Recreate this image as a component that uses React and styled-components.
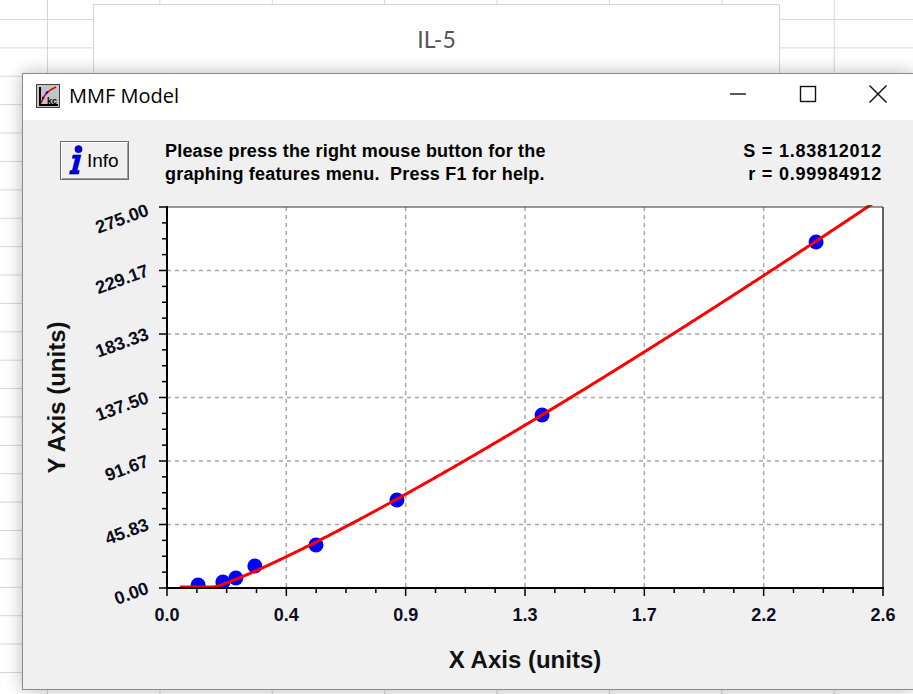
import styled, { createGlobalStyle } from "styled-components";

const GlobalStyle = createGlobalStyle`
  html, body {
    margin: 0;
    padding: 0;
    background: #fff;
  }
  body {
    font-family: "Liberation Sans", Arial, sans-serif;
  }
`;

// plot frame in page coordinates
const PLOT = { left: 167, right: 883, top: 207, bottom: 588 };
const X_MAX = 2.6;
const Y_MAX = 275;

const xScale = (v) => PLOT.left + (v / X_MAX) * (PLOT.right - PLOT.left);
const yScale = (v) => PLOT.bottom - (v / Y_MAX) * (PLOT.bottom - PLOT.top);

const points = [
  [0.113, 2.2],
  [0.203, 4.3],
  [0.25, 7.2],
  [0.319, 15.9],
  [0.541, 31.0],
  [0.835, 63.5],
  [1.362, 124.9],
  [2.357, 249.7],
];

// fitted model, flat at zero below the threshold
const model = (x) => (x <= 0.17 ? 0 : 101.5 * Math.pow(x - 0.17, 1.15));

const yLabels = ["0.00", "45.83", "91.67", "137.50", "183.33", "229.17", "275.00"];
const xLabels = ["0.0", "0.4", "0.9", "1.3", "1.7", "2.2", "2.6"];

const Desktop = styled.div`
  width: 913px;
  height: 694px;
  overflow: hidden;
  padding-top: 4px;
  box-sizing: border-box;
  background-color: #fff;
  background-image: linear-gradient(to right, #d6d6d6 1px, transparent 1px),
    linear-gradient(to bottom, #d6d6d6 1px, transparent 1px);
  background-size: 112.4px 28.4px;
  background-position: 47px 19px;
`;

const ChartTitleBox = styled.div`
  margin-left: 93px;
  width: 687px;
  height: 69px;
  box-sizing: border-box;
  background: #fff;
  border: 1px solid #d4d4d4;
  border-bottom: none;
  display: flex;
  align-items: center;
  justify-content: center;
  font-family: Lato, "Open Sans", sans-serif;
  font-size: 23px;
  color: #555;
`;

const Window = styled.div`
  margin-left: 22px;
  width: 892px;
  height: 617px;
  box-sizing: border-box;
  border: 1px solid #8c8c8c;
  background: #f0f0f0;
  box-shadow: 0 0 16px rgba(0, 0, 0, 0.28);
  display: flex;
  flex-direction: column;
`;

const TitleBar = styled.div`
  height: 46px;
  flex: none;
  background: #fff;
  display: flex;
  align-items: center;
  padding-left: 13px;
`;

const AppIcon = styled.svg`
  width: 24px;
  height: 24px;
  margin-top: -3px;
  flex: none;
`;

const TitleText = styled.span`
  margin-left: 9px;
  margin-top: -3px;
  font-family: "Open Sans", "Noto Sans", sans-serif;
  font-size: 20px;
  color: #000;
`;

const Controls = styled.div`
  margin-left: auto;
  display: flex;
  height: 100%;
`;

const ControlButton = styled.div`
  width: 70px;
  height: 100%;
  display: flex;
  align-items: center;
  justify-content: center;
  margin-top: -3px;

  svg {
    stroke: #111;
    stroke-width: 1.4;
    fill: none;
  }
`;

const Body = styled.div`
  flex: 1;
  display: flex;
  flex-direction: column;
`;

const Header = styled.div`
  height: 67px;
  flex: none;
  box-sizing: border-box;
  padding: 21px 31px 0 37px;
  display: flex;
  align-items: flex-start;
`;

const InfoButton = styled.div`
  width: 69px;
  height: 39px;
  box-sizing: border-box;
  flex: none;
  border: 1px solid #6a6a6a;
  box-shadow: inset 1px 1px 0 #fff, inset -1px -1px 0 #a0a0a0;
  background: #f0f0f0;
  display: flex;
  align-items: center;
  padding-left: 7px;
  gap: 4px;
  font-family: "Liberation Sans", Arial, sans-serif;
  font-size: 19px;
  color: #000;
`;

const Message = styled.div`
  margin-left: 36px;
  margin-top: -1px;
  font-family: "Liberation Sans", Arial, sans-serif;
  font-weight: bold;
  font-size: 18px;
  line-height: 23px;
  letter-spacing: 0.2px;
  color: #000;
  white-space: pre;
`;

const Stats = styled(Message)`
  margin-left: auto;
  text-align: right;
  letter-spacing: 0.8px;
`;

const Chart = styled.svg`
  display: block;
  width: 890px;
  height: 502px;
  flex: none;
`;

const TickLabel = styled.text`
  font-family: "Liberation Sans", Arial, sans-serif;
  font-weight: bold;
  font-size: 18px;
  fill: #0c0c1c;
`;

const AxisTitle = styled.text`
  font-family: "Liberation Sans", Arial, sans-serif;
  font-weight: bold;
  font-size: 24px;
  fill: #111;
`;

const InfoIcon = () => (
  <svg width="15" height="31" viewBox="0 0 15 31">
    <circle cx="10.5" cy="4.2" r="3.6" fill="#0000e6" stroke="#00007a" strokeWidth="0.6" />
    <path
      d="M5 10 L13 10 L9 25.5 L11.3 25.5 L10.6 29 L1.5 29 L2.2 25.5 L4.4 25.5 L7.4 13.3 L4.3 13.3 Z"
      fill="#0000e6"
      stroke="#00007a"
      strokeWidth="0.6"
    />
  </svg>
);

const ModelIcon = () => (
  <AppIcon viewBox="0 0 24 24">
    <rect x="0.5" y="0.5" width="23" height="23" fill="#c4c4c4" stroke="#404040" />
    <path d="M4 3 L4 21 L22 21" stroke="#000" strokeWidth="2" fill="none" />
    <path d="M5 19 Q8 8 20 3" stroke="#e00000" strokeWidth="1.6" fill="none" />
    <circle cx="7" cy="14" r="1.3" fill="#0000ff" />
    <circle cx="11" cy="8.5" r="1.3" fill="#0000ff" />
    <text x="11" y="20" fontSize="9" fontWeight="bold" fontFamily="Liberation Sans" fill="#000">
      kc
    </text>
  </AppIcon>
);

const curvePath = () => {
  const pts = [];
  for (let x = 0.047; x <= 2.62; x += 0.005) {
    pts.push(`${xScale(x).toFixed(1)},${(yScale(model(x)) - 1).toFixed(1)}`);
  }
  return "M" + pts.join(" L");
};

const PlotDrawing = () => {
  const w = PLOT.right - PLOT.left;
  const h = PLOT.bottom - PLOT.top;
  const majorX = [1, 2, 3, 4, 5].map((k) => PLOT.left + (k * w) / 6);
  const majorY = [1, 2, 3, 4, 5].map((k) => PLOT.top + (k * h) / 6);
  const minorX = Array.from({ length: 25 }, (_, k) => PLOT.left + (k * w) / 24);
  const minorY = Array.from({ length: 25 }, (_, k) => PLOT.top + (k * h) / 24);

  return (
    <Chart viewBox="23 187 890 502">
      <defs>
        <clipPath id="plotClip">
          <rect x={PLOT.left} y={PLOT.top - 2} width={w} height={h + 2} />
        </clipPath>
      </defs>

      <rect x={PLOT.left} y={PLOT.top} width={w} height={h} fill="#fff" />

      {majorX.map((x) => (
        <line key={"gx" + x} x1={x} x2={x} y1={PLOT.top} y2={PLOT.bottom}
          stroke="#a6a6a6" strokeWidth="1.5" strokeDasharray="4 4" />
      ))}
      {majorY.map((y) => (
        <line key={"gy" + y} x1={PLOT.left} x2={PLOT.right} y1={y} y2={y}
          stroke="#a6a6a6" strokeWidth="1.5" strokeDasharray="4 4" />
      ))}

      <g clipPath="url(#plotClip)">
        {points.map(([x, y]) => (
          <circle key={x} cx={xScale(x)} cy={yScale(y)} r="7.5" fill="#0000ff" />
        ))}
        <path d={curvePath()} stroke="#ff0000" strokeWidth="3" fill="none" strokeLinejoin="round" />
      </g>

      <line x1={PLOT.left} x2={PLOT.right} y1={PLOT.top} y2={PLOT.top} stroke="#333" strokeWidth="1" />
      <line x1={PLOT.right} x2={PLOT.right} y1={PLOT.top} y2={PLOT.bottom} stroke="#333" strokeWidth="1.5" />
      <line x1={PLOT.left} x2={PLOT.left} y1={PLOT.top - 1} y2={PLOT.bottom + 1} stroke="#000" strokeWidth="2" />
      <line x1={PLOT.left - 1} x2={PLOT.right + 1} y1={PLOT.bottom} y2={PLOT.bottom} stroke="#000" strokeWidth="2" />

      {minorY.map((y, k) => (
        <line key={"ty" + k} x1={k % 4 === 0 ? PLOT.left - 8 : PLOT.left - 5} x2={PLOT.left}
          y1={y} y2={y} stroke="#000" strokeWidth="1.5" />
      ))}
      {minorX.map((x, k) => (
        <line key={"tx" + k} x1={x} x2={x} y1={PLOT.bottom}
          y2={k % 4 === 0 ? PLOT.bottom + 8 : PLOT.bottom + 5} stroke="#000" strokeWidth="1.5" />
      ))}

      {yLabels.map((label, k) => {
        const y = PLOT.bottom - (k * h) / 6 + (k === 6 ? 8 : 5);
        return (
          <TickLabel key={label} textAnchor="end" transform={`translate(150 ${y}) rotate(-20)`}>
            {label}
          </TickLabel>
        );
      })}
      {xLabels.map((label, k) => (
        <TickLabel key={label} x={PLOT.left + (k * w) / 6} y="621" textAnchor="middle">
          {label}
        </TickLabel>
      ))}

      <AxisTitle x={(PLOT.left + PLOT.right) / 2} y="668" textAnchor="middle">
        X Axis (units)
      </AxisTitle>
      <AxisTitle textAnchor="middle" transform={`translate(65 ${(PLOT.top + PLOT.bottom) / 2}) rotate(-90)`}>
        Y Axis (units)
      </AxisTitle>
    </Chart>
  );
};

export default function App() {
  return (
    <>
      <GlobalStyle />
      <Desktop>
        <ChartTitleBox>IL-5</ChartTitleBox>
        <Window>
          <TitleBar>
            <ModelIcon />
            <TitleText>MMF Model</TitleText>
            <Controls>
              <ControlButton>
                <svg width="18" height="18" viewBox="0 0 18 18">
                  <line x1="1" y1="9" x2="17" y2="9" />
                </svg>
              </ControlButton>
              <ControlButton>
                <svg width="18" height="18" viewBox="0 0 18 18">
                  <rect x="1.5" y="1.5" width="15" height="15" />
                </svg>
              </ControlButton>
              <ControlButton>
                <svg width="20" height="20" viewBox="0 0 20 20">
                  <line x1="1.5" y1="1.5" x2="18.5" y2="18.5" />
                  <line x1="18.5" y1="1.5" x2="1.5" y2="18.5" />
                </svg>
              </ControlButton>
            </Controls>
          </TitleBar>
          <Body>
            <Header>
              <InfoButton>
                <InfoIcon />
                Info
              </InfoButton>
              <Message>
                {"Please press the right mouse button for the\ngraphing features menu.  Press F1 for help."}
              </Message>
              <Stats>{"S = 1.83812012\nr = 0.99984912"}</Stats>
            </Header>
            <PlotDrawing />
          </Body>
        </Window>
      </Desktop>
    </>
  );
}
